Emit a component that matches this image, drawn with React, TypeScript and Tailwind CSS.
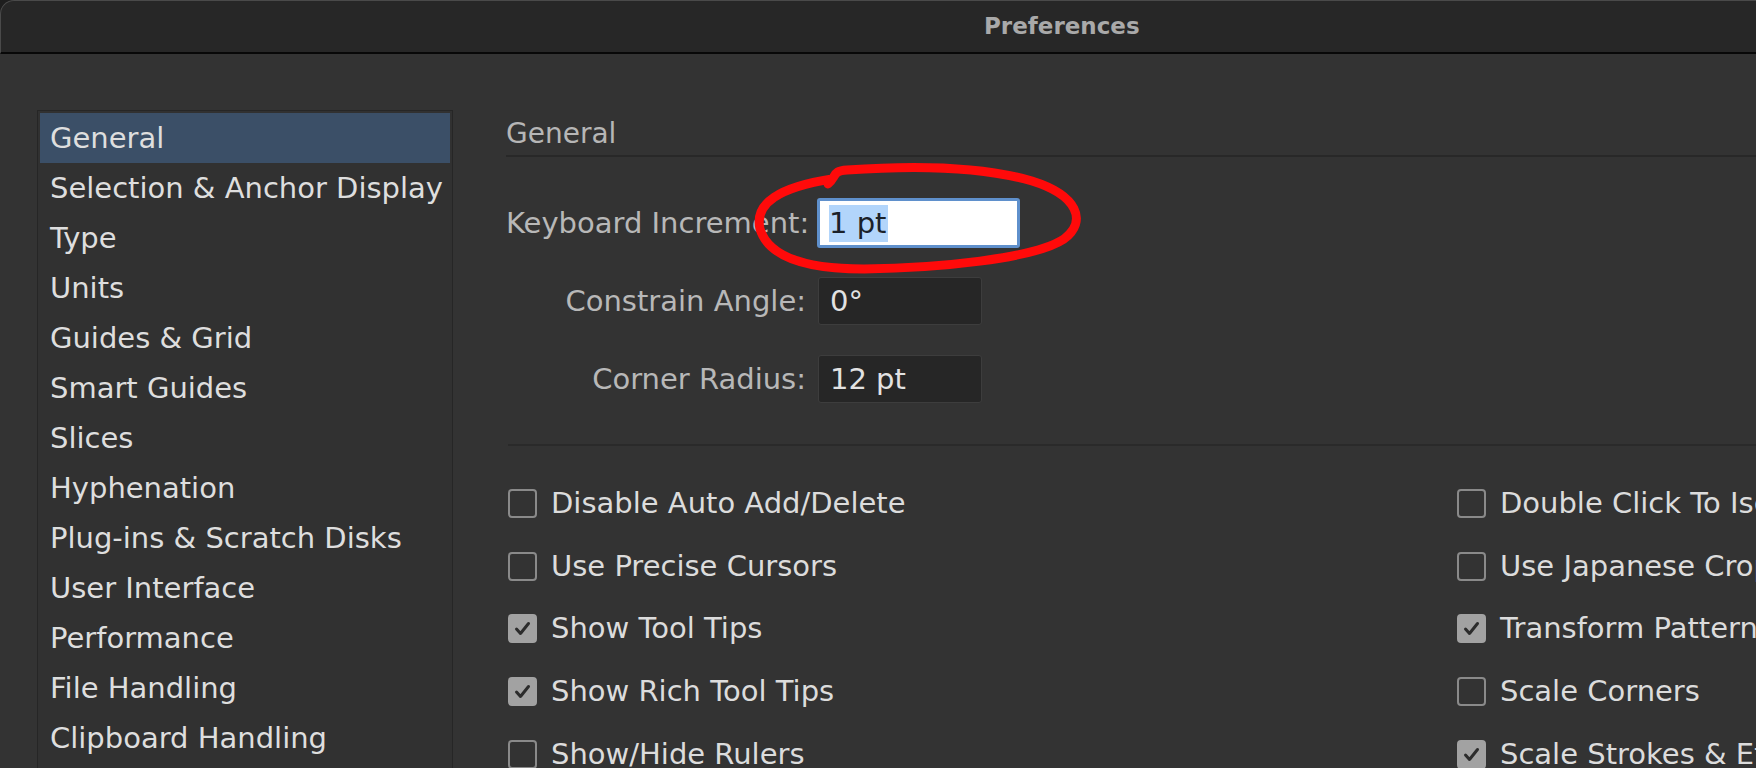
import React from "react";

const listItems = [
  "General",
  "Selection & Anchor Display",
  "Type",
  "Units",
  "Guides & Grid",
  "Smart Guides",
  "Slices",
  "Hyphenation",
  "Plug-ins & Scratch Disks",
  "User Interface",
  "Performance",
  "File Handling",
  "Clipboard Handling",
  "Appearance of Black",
];

const leftChecks: [string, boolean][] = [
  ["Disable Auto Add/Delete", false],
  ["Use Precise Cursors", false],
  ["Show Tool Tips", true],
  ["Show Rich Tool Tips", true],
  ["Show/Hide Rulers", false],
];

const rightChecks: [string, boolean][] = [
  ["Double Click To Isolate", false],
  ["Use Japanese Crop Marks", false],
  ["Transform Pattern Tiles", true],
  ["Scale Corners", false],
  ["Scale Strokes & Effects", true],
];

function Check({ checked }: { checked: boolean }) {
  return checked ? (
    <div className="w-[29px] h-[29px] shrink-0 rounded-[4px] bg-[#a2a2a2] border-2 border-[#a2a2a2] flex items-center justify-center">
      <svg width="25" height="25" viewBox="0 0 25 25">
        <path d="M6.5 13 L10.5 17.5 L18.5 7.5" fill="none" stroke="#2c2c2c" strokeWidth="3" strokeLinecap="round" strokeLinejoin="round" />
      </svg>
    </div>
  ) : (
    <div className="w-[29px] h-[29px] shrink-0 rounded-[4px] border-2 border-[#8a8a8a]" />
  );
}

function CheckRow({ label, checked }: { label: string; checked: boolean }) {
  return (
    <div className="h-[62.7px] shrink-0 flex items-center gap-[14px] whitespace-nowrap">
      <Check checked={checked} />
      <span className="text-[29px] text-[#dcdcdc] leading-none">{label}</span>
    </div>
  );
}

export default function App() {
  return (
    <div
      className="relative w-[1756px] h-[768px] overflow-hidden bg-[#1e1e1e]"
      style={{ fontFamily: '"DejaVu Sans", "Liberation Sans", sans-serif' }}
    >
      <div className="w-full h-full flex flex-col rounded-tl-[14px] bg-[#333333] overflow-hidden">
        {/* Title bar */}
        <div className="h-[54px] shrink-0 bg-[#272727] border-b-2 border-[#080808] border-t border-l border-t-[#4a4a4a] border-l-[#4a4a4a] rounded-tl-[14px] flex items-center pl-[983px]">
          <span className="text-[23px] font-bold text-[#a9a9a9] leading-none">Preferences</span>
        </div>

        {/* Body */}
        <div className="flex-1 flex pt-[56px] pl-[37px] overflow-hidden">
          {/* Left list */}
          <div className="w-[416px] shrink-0 h-[800px] border border-[#262626] bg-[#313131] pt-[2px] px-[2px]">
            {listItems.map((item, i) => (
              <div
                key={item}
                className={
                  "h-[50px] flex items-center pl-[10px] text-[29px] leading-none whitespace-nowrap text-[#dedede] " +
                  (i === 0 ? "bg-[#3b4f67]" : "")
                }
              >
                {item}
              </div>
            ))}
          </div>

          {/* Right content */}
          <div className="flex-1 flex flex-col pl-[53px] pt-[2px]">
            <div className="h-[45px] shrink-0 flex items-center border-b-2 border-[#282828]">
              <span className="text-[28px] text-[#b6b6b6] leading-none">General</span>
            </div>

            <div className="flex flex-col shrink-0 gap-[30px] mt-[42px]">
              <div className="flex items-center h-[48px]">
                <span className="w-[300px] text-right text-[29px] text-[#b8b8b8] leading-none whitespace-nowrap">Keyboard Increment:</span>
                <div className="ml-[11px] w-[203px] h-[50px] bg-white rounded-[3px] border-[3px] border-[#5f90cc] flex items-center pl-[9px]">
                  <span className="bg-[#b2d5fb] text-[#1b2129] text-[29px] leading-[37px] h-[37px] pr-[2px]">1 pt</span>
                </div>
              </div>
              <div className="flex items-center h-[48px]">
                <span className="w-[300px] text-right text-[29px] text-[#b8b8b8] leading-none whitespace-nowrap">Constrain Angle:</span>
                <div className="ml-[12px] w-[164px] h-[48px] bg-[#262626] rounded-[3px] border border-[#3d3d3d] flex items-center pl-[11px]">
                  <span className="text-[#e2e2e2] text-[29px] leading-none">0°</span>
                </div>
              </div>
              <div className="flex items-center h-[48px]">
                <span className="w-[300px] text-right text-[29px] text-[#b8b8b8] leading-none whitespace-nowrap">Corner Radius:</span>
                <div className="ml-[12px] w-[164px] h-[48px] bg-[#262626] rounded-[3px] border border-[#3d3d3d] flex items-center pl-[11px]">
                  <span className="text-[#e2e2e2] text-[29px] leading-none">12 pt</span>
                </div>
              </div>
            </div>

            <div className="mt-[41px] shrink-0 border-t-2 border-[#2a2a2a] ml-[2px]" />

            <div className="grid shrink-0 grid-cols-[949px_1fr] mt-[26px] ml-[2px]">
              <div className="flex flex-col">
                {leftChecks.map(([l, c]) => (
                  <CheckRow key={l} label={l} checked={c} />
                ))}
              </div>
              <div className="flex flex-col">
                {rightChecks.map(([l, c]) => (
                  <CheckRow key={l} label={l} checked={c} />
                ))}
              </div>
            </div>
          </div>
        </div>
      </div>

      {/* Red hand-drawn annotation */}
      <svg className="absolute left-0 top-0 pointer-events-none" width="1756" height="768" viewBox="0 0 1756 768">
        <path
          d="M828 184 C837 176 832 171 847 170 C902 166 977 165 1032 181 C1077 195 1088 221 1064 239 C1034 259 937 268 864 269 C802 269 768 255 760 229 C754 203 780 187 832 179"
          fill="none"
          stroke="#ff0a0a"
          strokeWidth="9"
          strokeLinecap="round"
          strokeLinejoin="round"
        />
      </svg>
    </div>
  );
}
